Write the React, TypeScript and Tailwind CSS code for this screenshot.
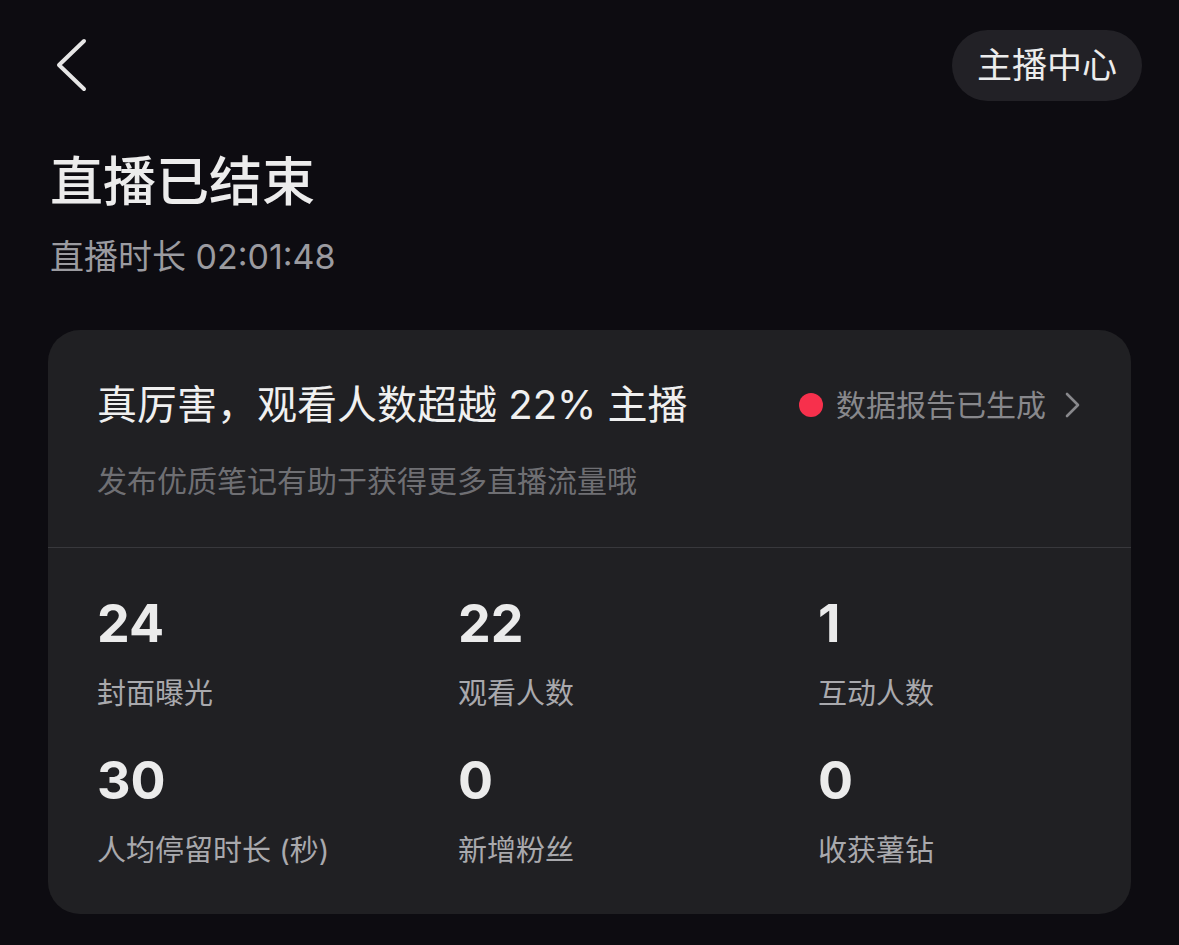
const base = { fontFamily: 'Inter, "Noto Sans CJK SC", "Noto Sans", sans-serif' };

const stats = [
  { value: "24", label: "封面曝光" },
  { value: "22", label: "观看人数" },
  { value: "1", label: "互动人数" },
  { value: "30", label: "人均停留时长 (秒)" },
  { value: "0", label: "新增粉丝" },
  { value: "0", label: "收获薯钻" },
];

export default function App() {
  return (
    <div className="min-h-[945px] w-full bg-[#0d0c11] pt-[30px] text-[#ececec]" style={base}>
      {/* Top bar */}
      <div className="flex h-[71px] items-center justify-between pl-[56px] pr-[37px]">
        <svg width="32" height="56" viewBox="0 0 32 56" fill="none">
          <polyline
            points="28,3 3,27 28,51"
            stroke="#e6e6e6"
            strokeWidth="4"
            strokeLinecap="round"
            strokeLinejoin="round"
          />
        </svg>
        <button className="flex h-[71px] items-center rounded-full bg-[#222126] px-[25px] text-[35px] leading-[35px] text-[#ececec]">
          主播中心
        </button>
      </div>

      {/* Title */}
      <div className="px-[50px]">
        <h1 className="mt-[55px] text-[53px] leading-[53px] font-medium text-[#ececec]">
          直播已结束
        </h1>
        <p className="mt-[31px] text-[34px] leading-[34px] text-[#9b9ba0]">
          直播时长 02:01:48
        </p>
      </div>

      {/* Card */}
      <div className="mx-12 mt-[56px] rounded-[32px] bg-[#202023]">
        <div className="px-[49px] pt-[55px] pb-[51px]">
          <div className="flex items-center justify-between">
            <p className="text-[40px] leading-[40px] text-[#f0f0f0]">
              真厉害，观看人数超越 22% 主播
            </p>
            <div className="flex items-center">
              <span className="h-[24px] w-[24px] rounded-full bg-[#f7304c]" />
              <span className="ml-[13px] text-[30px] leading-[30px] text-[#88888c]">
                数据报告已生成
              </span>
              <svg className="ml-[18px]" width="18" height="28" viewBox="0 0 18 28" fill="none">
                <polyline
                  points="3,3 14,14 3,25"
                  stroke="#88888c"
                  strokeWidth="2.6"
                  strokeLinecap="round"
                  strokeLinejoin="round"
                />
              </svg>
            </div>
          </div>
          <p className="mt-[41px] text-[30px] leading-[30px] text-[#6f6f73]">
            发布优质笔记有助于获得更多直播流量哦
          </p>
        </div>

        <div className="h-px bg-[#38383c]" />

        <div className="grid grid-cols-[361px_360px_1fr] gap-y-[47px] pl-[49px] pt-[50px] pb-[49px]">
          {stats.map((s, i) => (
            <div key={i} className="flex flex-col">
              <span className="text-[52px] leading-[52px] font-bold text-[#ebebeb]">
                {s.value}
              </span>
              <span className="mt-[29px] text-[29px] leading-[29px] text-[#a9a9ad]">
                {s.label}
              </span>
            </div>
          ))}
        </div>
      </div>
    </div>
  );
}
